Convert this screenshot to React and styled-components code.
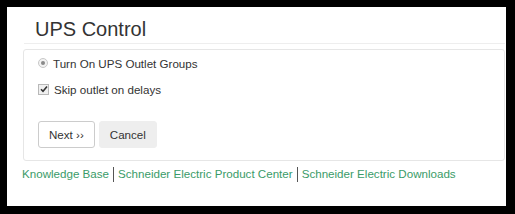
import React from 'react';
import styled, { createGlobalStyle } from 'styled-components';

const GlobalStyle = createGlobalStyle`
  html, body {
    margin: 0;
    padding: 0;
    background: #000;
  }
  body {
    font-family: Arial, "Liberation Sans", sans-serif;
    color: #333;
  }
`;

const Frame = styled.div`
  width: 515px;
  height: 214px;
  padding: 7px 9px 8px 7px;
  box-sizing: border-box;
  background: #000;
`;

const Page = styled.div`
  height: 100%;
  background: #fff;
  padding: 0 1px 0 15px;
  box-sizing: border-box;
  overflow: hidden;
`;

const Header = styled.div`
  margin-left: 2px;
  padding: 10px 0 2px 11px;
  border-bottom: 1px solid #eee;
`;

const Title = styled.h1`
  margin: 0;
  font-size: 20px;
  line-height: 24px;
  font-weight: normal;
  color: #333;
`;

const Panel = styled.div`
  margin-top: 5px;
  margin-left: 1px;
  border: 1px solid #e6e6e6;
  border-radius: 3px;
  padding: 3px 14px 12px 14px;
`;

const OptionRow = styled.label`
  display: flex;
  align-items: center;
  height: 20px;
  margin-bottom: ${p => p.$gap || 0}px;
  font-size: 11.6px;
  color: #333;
  gap: 5px;
`;

const RadioMark = styled.span`
  width: 8px;
  height: 8px;
  border: 1px solid #c8c8c8;
  border-radius: 50%;
  background: #f2f2f2;
  display: flex;
  align-items: center;
  justify-content: center;
  &::after {
    content: '';
    width: 4px;
    height: 4px;
    border-radius: 50%;
    background: #8a8a8a;
  }
`;

const CheckMark = styled.span`
  width: 9px;
  height: 9px;
  border: 1px solid #b8b8b8;
  background: #f0f0f0;
  display: flex;
  align-items: center;
  justify-content: center;
`;

const Buttons = styled.div`
  display: flex;
  gap: 4px;
  margin-top: 22px;
`;

const Button = styled.button`
  font-family: inherit;
  font-size: 11.6px;
  height: 27px;
  padding: 0 10px;
  border-radius: 3px;
  border: 1px solid ${p => (p.$primary ? '#ccc' : '#eee')};
  background: ${p => (p.$primary ? '#fff' : '#eee')};
  color: #333;
  cursor: pointer;
`;

const Footer = styled.div`
  margin-top: 3px;
  font-size: 11.6px;
  line-height: 20px;
  white-space: nowrap;
  display: flex;
  align-items: center;
`;

const FooterLink = styled.a`
  color: #3a9b68;
  text-decoration: none;
`;

const Sep = styled.span`
  display: inline-block;
  width: 1px;
  height: 15px;
  background: #555;
  margin: 0 4px;
`;

export default function App() {
  return (
    <Frame>
      <GlobalStyle />
      <Page>
        <Header>
          <Title>UPS Control</Title>
        </Header>
        <Panel>
          <OptionRow $gap={6}>
            <RadioMark />
            Turn On UPS Outlet Groups
          </OptionRow>
          <OptionRow>
            <CheckMark>
              <svg width="8" height="8" viewBox="0 0 8 8">
                <path d="M1 4.2 L3 6.2 L7 1.5" fill="none" stroke="#333" strokeWidth="1.6" />
              </svg>
            </CheckMark>
            Skip outlet on delays
          </OptionRow>
          <Buttons>
            <Button $primary>Next ››</Button>
            <Button>Cancel</Button>
          </Buttons>
        </Panel>
        <Footer>
          <FooterLink href="#">Knowledge Base</FooterLink>
          <Sep />
          <FooterLink href="#">Schneider Electric Product Center</FooterLink>
          <Sep />
          <FooterLink href="#">Schneider Electric Downloads</FooterLink>
        </Footer>
      </Page>
    </Frame>
  );
}
